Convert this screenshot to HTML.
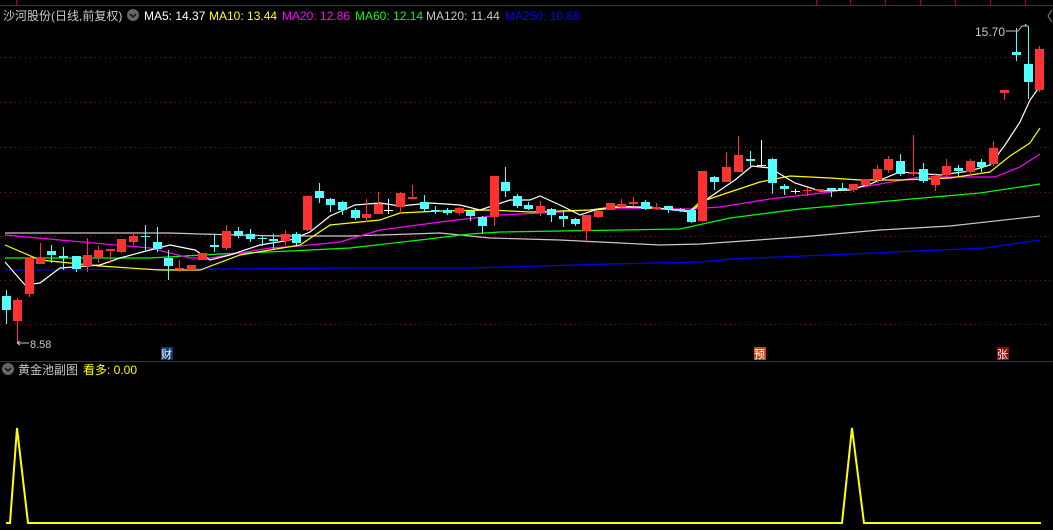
<!DOCTYPE html>
<html><head><meta charset="utf-8"><style>
html,body{margin:0;padding:0;background:#000;width:1053px;height:530px;overflow:hidden}
svg{display:block}
text{font-family:"Liberation Sans","Noto Sans CJK SC",sans-serif}
</style></head><body>
<svg id="s" width="1053" height="530" viewBox="0 0 1053 530">
<rect width="1053" height="530" fill="#000"/>
<line x1="0" y1="5.5" x2="1053" y2="5.5" stroke="#b00000"/>
<g stroke="#b00000"><line x1="16.5" y1="0" x2="16.5" y2="5"/><line x1="816.5" y1="0" x2="816.5" y2="5"/><line x1="850.5" y1="0" x2="850.5" y2="5"/><line x1="885.5" y1="0" x2="885.5" y2="5"/><line x1="920.5" y1="0" x2="920.5" y2="5"/><line x1="955.5" y1="0" x2="955.5" y2="5"/><line x1="990.5" y1="0" x2="990.5" y2="5"/><line x1="1025.5" y1="0" x2="1025.5" y2="5"/></g>
<g id="grid" stroke="#8a1010" stroke-dasharray="1,4"></g>
<text x="3" y="20" fill="#c8c8c8" font-size="12">沙河股份(日线,前复权)</text>
<circle cx="133" cy="15" r="6" fill="#666"/><path d="M130 14l3 3 3-3" stroke="#111" stroke-width="1.5" fill="none"/>
<text x="144" y="20" font-size="12" fill="#fff">MA5: 14.37</text>
<text x="209" y="20" font-size="12" fill="#ffff00">MA10: 13.44</text>
<text x="282" y="20" font-size="12" fill="#ff00ff">MA20: 12.86</text>
<text x="355" y="20" font-size="12" fill="#00ff00">MA60: 12.14</text>
<text x="426" y="20" font-size="12" fill="#c8c8c8">MA120: 11.44</text>
<text x="505" y="20" font-size="12" fill="#0000ff">MA250: 10.88</text>
<path d="M1052 10l-4 6 4 6" stroke="#888" fill="none"/>
<g id="ma" fill="none" stroke-width="1.2"></g>
<g id="c"></g>
<text x="975" y="36" font-size="12" fill="#c8c8c8">15.70</text>
<path d="M1006 31h12l4-5h5M1023 26l4 0-2-2" stroke="#c8c8c8" fill="none"/>
<path d="M17 343h12M17 343l3-2M17 343l3 2" stroke="#c8c8c8" fill="none"/>
<text x="30" y="348" font-size="11" fill="#c8c8c8">8.58</text>
<rect x="161" y="347" width="12" height="13" fill="#0e3a6e"/><text x="161" y="358" font-size="11" fill="#fff">财</text>
<rect x="754" y="347" width="12" height="13" fill="#c04a10"/><text x="754" y="358" font-size="11" fill="#fff">预</text>
<rect x="997" y="347" width="12" height="13" fill="#8a0c0c"/><text x="997" y="358" font-size="11" fill="#fff">张</text>
<line x1="0" y1="361.5" x2="1053" y2="361.5" stroke="#b00000"/>
<circle cx="8" cy="369" r="6" fill="#666"/><path d="M5 368l3 3 3-3" stroke="#111" stroke-width="1.5" fill="none"/>
<text x="18" y="374" font-size="12" fill="#c8c8c8">黄金池副图</text>
<text x="83" y="374" font-size="12" fill="#ffff00">看多: 0.00</text>
<polyline points="6,523 10,523 17,428 28,523 842,523 852,428 864,523 1041,523" stroke="#ffff00" stroke-width="2" fill="none"/>
</svg>
<script>
var NS="http://www.w3.org/2000/svg";
function el(p,t,a){var e=document.createElementNS(NS,t);for(var k in a)e.setAttribute(k,a[k]);p.appendChild(e);return e;}
var g=document.getElementById('grid');
[57,102,147,192,236,280,324].forEach(function(y){el(g,'line',{x1:0,y1:y+.5,x2:1053,y2:y+.5});});
var ma=document.getElementById('ma');
var L={
"#0000ff":"5,270 220,269 350,268 470,268 610,264 700,262 732,259 850,254 985,248 1040,240",
"#c8c8c8":"5,233 170,233 200,234 280,236 350,236 440,233 490,238 560,240 620,243 660,245 700,244 800,237 880,230 950,226 1040,216",
"#00ff00":"5,258 150,258 220,254 290,251 350,248 420,240 470,234 500,232 680,229 730,218 800,209 900,200 980,193 1040,184",
"#ff00ff":"5,235 60,240 150,248 190,258 210,258 270,248 300,246 340,242 380,230 440,222 500,215 560,212 620,208 690,209 720,207 770,199 830,192 880,184 920,177 995,177 1020,167 1040,154",
"#ffff00":"5,245 40,260 70,263 100,266 160,270 200,270 240,255 270,250 300,245 330,225 380,220 400,213 440,211 490,210 530,212 590,210 620,206 650,208 690,211 700,202 730,192 760,182 790,176 830,178 860,180 900,180 950,178 990,172 1010,156 1030,143 1040,128",
"#ffffff":"5,262 25,285 40,283 60,268 100,265 120,258 150,250 170,245 195,250 210,260 230,255 260,245 290,240 310,232 330,216 355,205 380,203 400,206 430,203 460,205 480,210 495,205 510,200 530,200 540,196 560,205 580,215 595,210 620,207 650,207 690,212 710,197 735,180 752,166 770,168 795,183 820,191 850,190 870,184 900,172 940,175 970,171 990,165 1005,145 1020,122 1030,100 1040,86"};
for(var c in L)el(ma,'polyline',{points:L[c],stroke:c});
// x, bodyTop, bodyBot, wickTop, wickBot, r(1)/c(0)
var C=[[6,296,310,290,324,0],[17,300,321,298,343,1],[29,258,294,258,297,1],[40,258,264,243,264,1],[51,251,255,245,263,0],[63,256,258,247,270,0],[76,256,269,256,272,0],[87,255,266,238,272,1],[98,250,258,246,263,1],[110,249,251,249,263,1],[121,239,252,239,253,1],[133,236,242,233,245,1],[145,236,237,225,252,0],[157,242,249,227,252,0],[168,258,266,250,280,0],[179,268,269,260,272,1],[191,265,270,265,270,1],[202,253,260,253,260,1],[214,245,247,235,252,0],[226,231,248,225,250,1],[238,231,236,227,238,0],[250,234,239,229,242,0],[262,238,239,235,246,0],[273,239,241,234,249,0],[285,234,241,230,245,1],[296,234,243,232,245,0],
[307,196,230,196,231,1],[319,191,198,183,203,0],[330,199,205,198,212,0],[342,202,210,201,215,0],[355,210,218,208,220,0],[366,214,218,199,222,1],[378,204,214,192,214,1],[388,210,211,199,214,2],[400,193,207,192,213,1],[412,197,199,185,199,1],[424,202,209,195,211,0],[435,210,211,206,214,0],[447,210,213,208,215,0],[459,208,213,207,215,1],[470,211,216,210,221,0],[482,217,226,216,234,0],[494,176,217,176,226,1],[505,182,191,167,197,0],[517,196,206,194,208,0],[528,205,209,202,210,0],[540,206,212,201,216,1],[551,209,215,208,222,0],[563,216,219,210,227,0],[575,219,224,218,226,0],[586,215,231,215,243,1],[598,211,217,210,218,1],[610,203,210,203,210,1],[621,204,207,199,209,1],[633,202,204,197,206,1],[645,202,209,200,210,0],[656,207,209,203,210,1],[668,206,209,206,213,0],[680,209,211,208,212,0],[691,210,222,209,223,0],[702,171,221,171,222,1],[714,177,182,176,190,0],[726,167,182,152,182,1],[738,155,172,136,172,1],[750,159,161,151,166,0],[761,165,166,140,167,2],[772,159,183,158,194,0],[784,186,189,184,195,0],[795,191,192,189,194,2],[807,190,191,188,196,1],[819,189,191,189,191,1],[831,188,190,188,197,0],[842,188,190,183,191,0],[853,184,190,184,192,1],[865,179,185,179,186,1],[877,169,180,165,183,1],[888,159,170,156,173,1],[900,161,174,154,176,0],[913,172,174,135,176,1],[923,169,181,163,183,0],[935,176,185,173,191,1],[946,166,175,159,177,1],[958,168,171,165,176,0],[970,161,172,159,177,1],[981,162,167,159,172,0],[993,148,164,141,166,1],[1004,90,93,90,100,1],[1016,52,55,28,61,0],[1028,64,82,26,99,0],[1039,49,90,46,92,1]];
var cg=document.getElementById('c');
C.forEach(function(d){var col=d[5]==1?'#ff3232':d[5]==2?'#ffffff':'#54ffff';
el(cg,'line',{x1:d[0]+.5,y1:d[3],x2:d[0]+.5,y2:d[4],stroke:col});
var h=Math.max(1,d[2]-d[1]);el(cg,'rect',{x:d[0]-4,y:d[1],width:9,height:h,fill:col});});
</script>
</body></html>
